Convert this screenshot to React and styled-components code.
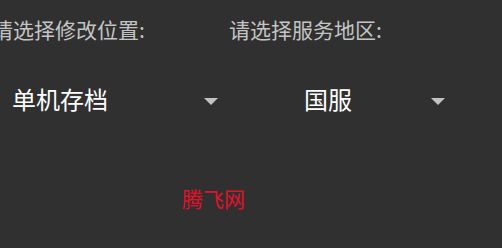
import React from "react";
import styled, { createGlobalStyle } from "styled-components";

const Global = createGlobalStyle`
  html, body {
    margin: 0;
    padding: 0;
    background: #303030;
    overflow: hidden;
  }
  body {
    font-family: "Noto Sans CJK SC", "Noto Sans", sans-serif;
  }
`;

const Screen = styled.div`
  width: 502px;
  height: 248px;
  background: #303030;
  overflow: hidden;
  display: flex;
  flex-direction: column;
`;

const Row = styled.div`
  display: flex;
  padding-top: 15px;
`;

const Field = styled.div`
  display: flex;
  flex-direction: column;
  width: ${(p) => p.width}px;
  margin-left: ${(p) => p.offset || 0}px;
`;

const Label = styled.div`
  font-size: 21px;
  line-height: 28px;
  color: #c4c4c4;
  white-space: nowrap;
  margin-left: ${(p) => p.shift || 0}px;
`;

const Spinner = styled.div`
  display: flex;
  align-items: center;
  justify-content: space-between;
  height: 48px;
  margin-top: 31px;
  margin-left: ${(p) => p.indent || 0}px;
  padding: 0 12px;
  color: #ffffff;
  font-size: 24px;
`;

const Arrow = styled.span`
  width: 0;
  height: 0;
  border-left: 7px solid transparent;
  border-right: 7px solid transparent;
  border-top: 7px solid #c2c2c2;
  margin-top: 6px;
`;

const Footer = styled.div`
  margin-top: 62px;
  padding-left: 182px;
  font-size: 21px;
  line-height: 28px;
  color: #e3102a;
`;

export default function App() {
  return (
    <Screen>
      <Global />
      <Row>
        <Field width={230}>
          <Label shift={-8}>请选择修改位置:</Label>
          <Spinner>
            <span>单机存档</span>
            <Arrow />
          </Spinner>
        </Field>
        <Field width={228} offset={-1}>
          <Label>请选择服务地区:</Label>
          <Spinner indent={63}>
            <span>国服</span>
            <Arrow />
          </Spinner>
        </Field>
      </Row>
      <Footer>腾飞网</Footer>
    </Screen>
  );
}
